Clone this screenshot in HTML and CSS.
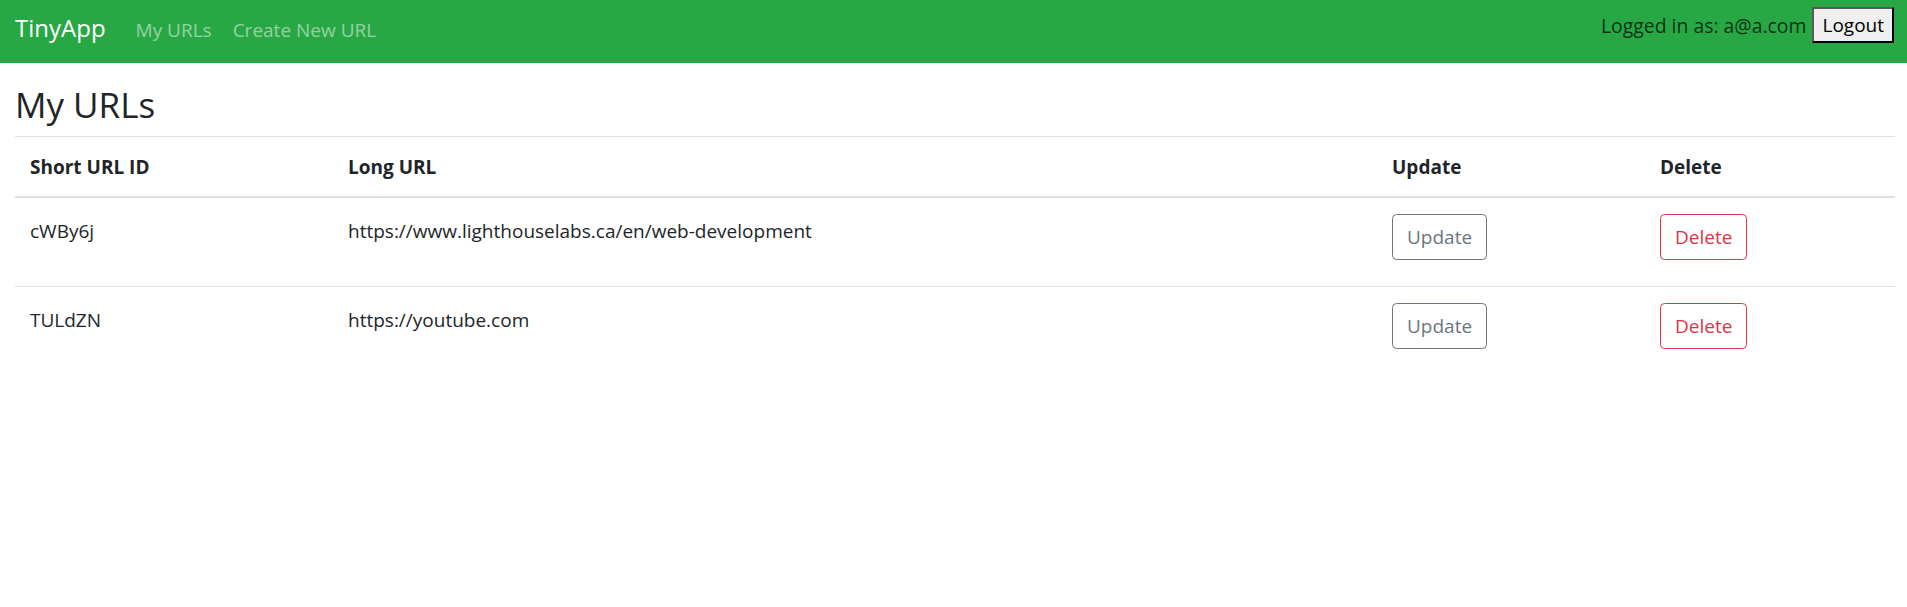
FILE: index.html
```html
<!DOCTYPE html>
<html lang="en">
<head>
<meta charset="utf-8">
<title>TinyApp</title>
<link rel="stylesheet" href="styles.css">
</head>
<body>
<nav class="navbar">
  <a class="brand" href="#">TinyApp</a>
  <div class="nav-links">
    <a class="nav-link" href="#">My URLs</a>
    <a class="nav-link" href="#">Create New URL</a>
  </div>
  <div class="user">
    <span class="user-text">Logged in as: a@a.com</span>
    <button class="logout" type="button">Logout</button>
  </div>
</nav>
<main class="container">
  <h1 class="title">My URLs</h1>
  <table class="urls">
    <colgroup>
      <col class="c1"><col class="c2"><col class="c3"><col class="c4">
    </colgroup>
    <thead>
      <tr><th>Short URL ID</th><th>Long URL</th><th>Update</th><th>Delete</th></tr>
    </thead>
    <tbody>
      <tr>
        <td>cWBy6j</td>
        <td>https://www.lighthouselabs.ca/en/web-development</td>
        <td class="btn-cell"><button class="btn btn-update" type="button">Update</button></td>
        <td class="btn-cell"><button class="btn btn-delete" type="button">Delete</button></td>
      </tr>
      <tr>
        <td>TULdZN</td>
        <td>https://youtube.com</td>
        <td class="btn-cell"><button class="btn btn-update" type="button">Update</button></td>
        <td class="btn-cell"><button class="btn btn-delete" type="button">Delete</button></td>
      </tr>
    </tbody>
  </table>
</main>
</body>
</html>
```
FILE: styles.css
```css
* { box-sizing: border-box; }
body {
  margin: 0;
  font-family: "Open Sans", "Noto Sans", sans-serif;
  color: #212529;
  background: #fff;
}
.navbar {
  height: 63px;
  background: #28a745;
  display: flex;
  align-items: center;
  padding: 0 13px 0 15px;
}
.brand {
  font-size: 24px;
  color: #fff;
  text-decoration: none;
  margin-right: 30px;
  line-height: 1;
  padding-bottom: 8px;
}
.nav-links { display: flex; gap: 21px; padding-bottom: 4px; }
.nav-link {
  font-size: 19px;
  color: rgba(255,255,255,.5);
  text-decoration: none;
}
.user {
  margin-left: auto;
  display: flex;
  align-items: center;
  gap: 6px;
  align-self: flex-start;
  padding-top: 7px;
}
.user-text {
  font-size: 19.4px;
  color: rgba(0,0,0,.72);
}
.logout {
  font-family: "Open Sans", "Noto Sans", sans-serif;
  font-size: 19px;
  height: 36px;
  padding: 0 8px;
  background: #efefef;
  color: #000;
  border-width: 2px;
  border-style: solid;
  border-color: #5a5a5a #000 #000 #5a5a5a;
  border-radius: 0;
}
.container { padding: 0 12px 0 15px; }
.title {
  font-size: 35px;
  font-weight: 500;
  line-height: 1.2;
  margin: 21px 0 10px;
}
.urls {
  width: 100%;
  border-collapse: collapse;
  font-size: 19px;
}
.c1 { width: 318px; }
.c2 { width: 1044px; }
.c3 { width: 268px; }
.c4 { width: 250px; }
.urls th {
  text-align: left;
  font-weight: 700;
  line-height: 27px;
  padding: 17px 15px 15px;
  border-top: 1px solid #dee2e6;
  border-bottom: 2px solid #dee2e6;
}
.urls td {
  vertical-align: top;
  line-height: 34px;
  padding: 16px 15px 26px;
  border-bottom: 1px solid #dee2e6;
}
.urls tbody tr:last-child td { border-bottom: none; }
.btn {
  font-family: inherit;
  font-size: 19px;
  height: 46px;
  padding: 0 14px;
  background: transparent;
  border: 1px solid;
  border-radius: 4.5px;
  line-height: 1;
  display: block;
}
.btn-update { color: #6c757d; border-color: #6c757d; }
.btn-delete { color: #dc3545; border-color: #dc3545; }
```
